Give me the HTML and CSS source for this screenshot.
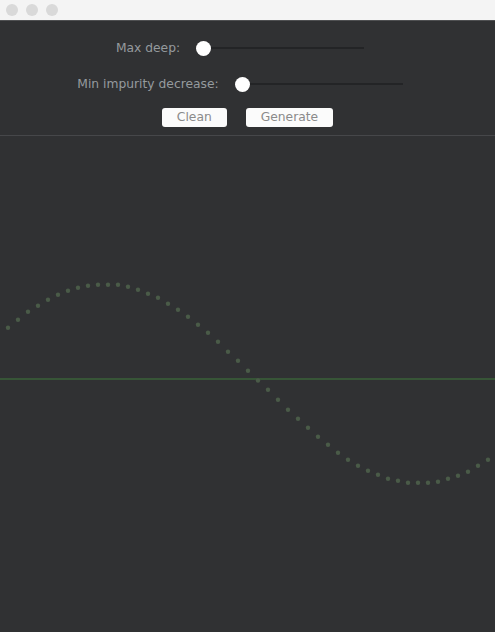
FILE: index.html
```html
<!DOCTYPE html>
<html>
<head>
<meta charset="utf-8">
<link rel="stylesheet" href="styles.css">
</head>
<body>
<div class="window">
  <div class="titlebar">
    <span class="light"></span><span class="light"></span><span class="light"></span>
  </div>
  <div class="controls">
    <div class="row row-first">
      <span class="label">Max deep:</span>
      <div class="slider"><span class="thumb"></span><span class="track"></span></div>
    </div>
    <div class="row">
      <span class="label">Min impurity decrease:</span>
      <div class="slider"><span class="thumb"></span><span class="track"></span></div>
    </div>
    <div class="buttons">
      <button class="btn">Clean</button>
      <button class="btn">Generate</button>
    </div>
  </div>
  <div class="plot">
    <svg class="chart" viewBox="0 136 495 496" width="495" height="496">
      <line x1="0" y1="379" x2="495" y2="379" class="axis"/>
      <g class="dots">
        <circle cx="8" cy="327.7" r="2.2"/>
        <circle cx="18" cy="319.7" r="2.2"/>
        <circle cx="28" cy="311.7" r="2.2"/>
        <circle cx="38" cy="305.7" r="2.2"/>
        <circle cx="48" cy="299.7" r="2.2"/>
        <circle cx="58" cy="294.7" r="2.2"/>
        <circle cx="68" cy="290.7" r="2.2"/>
        <circle cx="78" cy="287.7" r="2.2"/>
        <circle cx="88" cy="285.7" r="2.2"/>
        <circle cx="98" cy="284.7" r="2.2"/>
        <circle cx="108" cy="284.7" r="2.2"/>
        <circle cx="118" cy="284.7" r="2.2"/>
        <circle cx="128" cy="286.7" r="2.2"/>
        <circle cx="138" cy="289.7" r="2.2"/>
        <circle cx="148" cy="293.7" r="2.2"/>
        <circle cx="158" cy="297.7" r="2.2"/>
        <circle cx="168" cy="303.7" r="2.2"/>
        <circle cx="178" cy="309.7" r="2.2"/>
        <circle cx="188" cy="316.7" r="2.2"/>
        <circle cx="198" cy="324.7" r="2.2"/>
        <circle cx="208" cy="332.7" r="2.2"/>
        <circle cx="218" cy="341.7" r="2.2"/>
        <circle cx="228" cy="351.7" r="2.2"/>
        <circle cx="238" cy="360.7" r="2.2"/>
        <circle cx="248" cy="370.7" r="2.2"/>
        <circle cx="258" cy="380.5" r="2.2"/>
        <circle cx="268" cy="389.7" r="2.2"/>
        <circle cx="278" cy="399.7" r="2.2"/>
        <circle cx="288" cy="409.7" r="2.2"/>
        <circle cx="298" cy="418.7" r="2.2"/>
        <circle cx="308" cy="427.7" r="2.2"/>
        <circle cx="318" cy="436.7" r="2.2"/>
        <circle cx="328" cy="444.7" r="2.2"/>
        <circle cx="338" cy="452.7" r="2.2"/>
        <circle cx="348" cy="459.7" r="2.2"/>
        <circle cx="358" cy="465.7" r="2.2"/>
        <circle cx="368" cy="470.7" r="2.2"/>
        <circle cx="378" cy="474.7" r="2.2"/>
        <circle cx="388" cy="478.7" r="2.2"/>
        <circle cx="398" cy="480.7" r="2.2"/>
        <circle cx="408" cy="482.7" r="2.2"/>
        <circle cx="418" cy="482.7" r="2.2"/>
        <circle cx="428" cy="482.7" r="2.2"/>
        <circle cx="438" cy="481.7" r="2.2"/>
        <circle cx="448" cy="478.7" r="2.2"/>
        <circle cx="458" cy="475.7" r="2.2"/>
        <circle cx="468" cy="471.7" r="2.2"/>
        <circle cx="478" cy="465.7" r="2.2"/>
        <circle cx="488" cy="459.7" r="2.2"/>
      </g>
    </svg>
  </div>
</div>
</body>
</html>
```

FILE: styles.css
```css
html, body {
  margin: 0;
  padding: 0;
  background: #303133;
}
.window {
  width: 495px;
  height: 632px;
  display: flex;
  flex-direction: column;
  overflow: hidden;
  font-family: "DejaVu Sans", Verdana, sans-serif;
}
.titlebar {
  height: 20px;
  background: #f4f4f4;
  border-bottom: 1px solid #4f5052;
  display: flex;
  align-items: center;
  gap: 8px;
  padding-left: 6px;
  flex-shrink: 0;
}
.light {
  width: 12px;
  height: 12px;
  border-radius: 50%;
  background: #d9d9d9;
}
.controls {
  padding: 17px 0 8px;
  border-bottom: 1px solid #46474a;
  flex-shrink: 0;
}
.row {
  height: 20px;
  display: flex;
  align-items: center;
  justify-content: center;
  padding-right: 15px;
  gap: 16px;
  margin-top: 16px;
}
.row-first {
  margin-top: 0;
}
.label {
  font-size: 12.3px;
  color: #959a9e;
}
.slider {
  width: 168px;
  height: 15px;
  display: flex;
  align-items: center;
}
.thumb {
  width: 15px;
  height: 15px;
  border-radius: 50%;
  background: #ffffff;
  flex-shrink: 0;
}
.track {
  flex: 1;
  height: 2px;
  background: #232426;
}
.buttons {
  display: flex;
  justify-content: center;
  gap: 19px;
  margin-top: 14px;
}
.btn {
  height: 19px;
  padding: 0 15px;
  border: none;
  border-radius: 3px;
  background: #fbfbfb;
  color: #8a8a8a;
  font-family: "DejaVu Sans", Verdana, sans-serif;
  font-size: 12.3px;
  line-height: 19px;
}
.plot {
  flex: 1;
}
.chart {
  display: block;
}
.axis {
  stroke: #3f7a3c;
  stroke-width: 1;
}
.dots circle {
  fill: #4a5b48;
}
```
